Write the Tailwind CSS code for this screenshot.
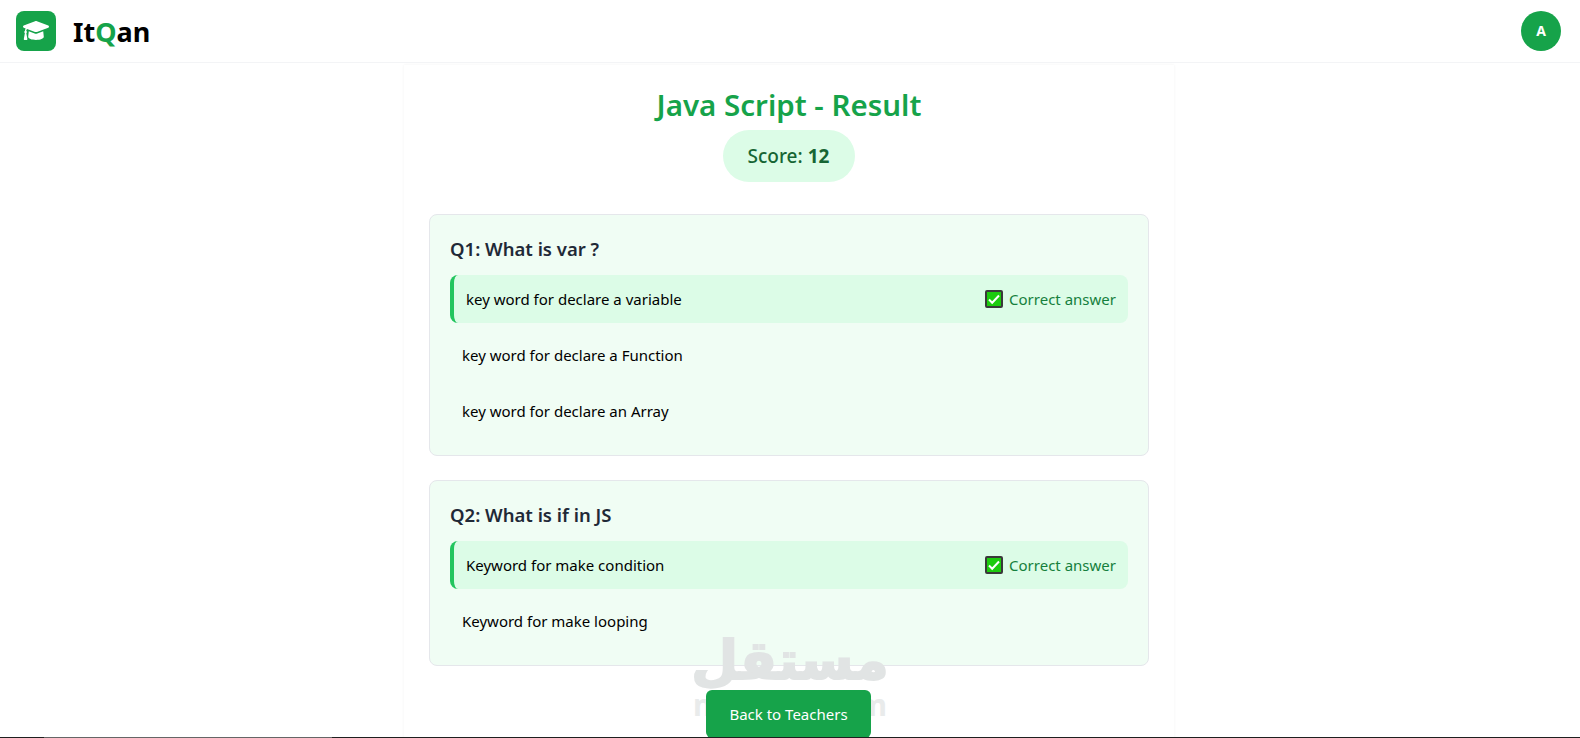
<!DOCTYPE html>
<html lang="en">
  <head>
    <meta charset="UTF-8" />
    <meta name="viewport" content="width=device-width, initial-scale=1.0" />
    <title>ItQan - Result</title>
    <script src="https://cdn.jsdelivr.net/npm/@tailwindcss/browser@4"></script>
  </head>
  <body class="bg-white h-[738px] overflow-hidden relative font-['Noto_Sans','Open_Sans',sans-serif] text-[15px] text-black">
    <!-- Header -->
    <header class="h-[63px] border-b border-[#f3f4f6] pl-4 pr-[19px] flex items-center justify-between">
      <div class="flex items-center gap-[17px]">
        <div class="w-10 h-10 rounded-lg bg-[#16a34a] flex items-center justify-center">
          <svg viewBox="0 64 640 384" preserveAspectRatio="none" class="w-[26px] h-[19px] -mt-[1px]" fill="#fff">
            <path d="M622.34 153.2L343.4 67.5c-15.2-4.67-31.6-4.67-46.79 0L17.66 153.2c-23.54 7.23-23.54 38.36 0 45.59l48.63 14.94c-10.67 13.19-17.23 29.28-17.88 46.9C38.78 266.15 32 276.11 32 288c0 10.78 5.68 19.85 13.86 25.65L20.33 428.53C18.11 438.52 25.71 448 35.94 448h56.11c10.24 0 17.84-9.48 15.62-19.47L82.14 313.65C90.32 307.85 96 298.78 96 288c0-11.57-6.47-21.25-15.66-26.87.76-15.02 8.44-28.3 20.69-36.72L296.6 284.5c9.06 2.78 26.44 6.25 46.79 0l278.95-85.7c23.55-7.24 23.55-38.36 0-45.6zM352.79 315.09c-28.53 8.76-52.84 3.92-65.59 0l-145.02-44.55L128 384c0 35.35 85.96 64 192 64s192-28.65 192-64l-14.18-113.47-145.03 44.56z" />
          </svg>
        </div>
        <span class="text-[27px] font-bold leading-none">It<span class="text-[#16a34a]">Q</span>an</span>
      </div>
      <div class="w-10 h-10 rounded-full bg-[#16a34a] flex items-center justify-center text-white text-sm font-bold">A</div>
    </header>

    <!-- Result card -->
    <main class="w-[770px] ml-[404px] mt-[2px] px-[25px] pt-[22px] bg-white shadow-[0_0_3px_rgba(0,0,0,0.05)] flex flex-col items-center h-[800px]">
      <h1 class="text-[29.5px] leading-[36px] font-semibold text-[#16a34a] text-center">Java Script - Result</h1>
      <div class="mt-[7px] h-[52px] w-[132px] mr-[1px] rounded-full bg-[#dcfce7] text-[#166534] text-[19px] font-medium flex items-center justify-center gap-[5px]">
        <span>Score:</span><span class="font-bold">12</span>
      </div>

      <!-- Q1 -->
      <section class="mt-8 w-full bg-[#f0fdf4] border border-[#e5e7eb] rounded-lg p-5">
        <h2 class="text-[18.5px] font-semibold text-[#1f2937] leading-7 mb-3">Q1: What is var ?</h2>
        <div class="flex flex-col gap-2">
          <div class="h-12 pl-3 pr-3 bg-[#dcfce7] border-l-4 border-[#22c55e] rounded-lg flex items-center justify-between">
            <span>key word for declare a variable</span>
            <span class="flex items-center gap-[6px] text-[#15803d]">
              <span class="w-[18px] h-[18px] bg-[#1ccb0e] border-2 border-[#3a3a3a] rounded-[2px] flex items-center justify-center">
                <svg viewBox="0 0 14 14" class="w-[14px] h-[14px]" fill="none" stroke="#fff" stroke-width="2"><path d="M2 7.5l3.2 3.2L12 3.5" /></svg>
              </span>
              Correct answer
            </span>
          </div>
          <div class="h-12 px-3 flex items-center">key word for declare a Function</div>
          <div class="h-12 px-3 flex items-center">key word for declare an Array</div>
        </div>
      </section>

      <!-- Q2 -->
      <section class="mt-6 w-full bg-[#f0fdf4] border border-[#e5e7eb] rounded-lg p-5">
        <h2 class="text-[18.5px] font-semibold text-[#1f2937] leading-7 mb-3">Q2: What is if in JS</h2>
        <div class="flex flex-col gap-2">
          <div class="h-12 pl-3 pr-3 bg-[#dcfce7] border-l-4 border-[#22c55e] rounded-lg flex items-center justify-between">
            <span>Keyword for make condition</span>
            <span class="flex items-center gap-[6px] text-[#15803d]">
              <span class="w-[18px] h-[18px] bg-[#1ccb0e] border-2 border-[#3a3a3a] rounded-[2px] flex items-center justify-center">
                <svg viewBox="0 0 14 14" class="w-[14px] h-[14px]" fill="none" stroke="#fff" stroke-width="2"><path d="M2 7.5l3.2 3.2L12 3.5" /></svg>
              </span>
              Correct answer
            </span>
          </div>
          <div class="h-12 px-3 flex items-center">Keyword for make looping</div>
        </div>
      </section>

      <button class="relative z-10 mt-6 mr-[1px] w-[165px] h-12 bg-[#16a34a] text-white rounded-md">Back to Teachers</button>
    </main>

    <!-- Watermark -->
    <div class="absolute left-[695px] top-[632px] w-[190px] flex flex-col items-center text-[#e1e4e4] pointer-events-none">
      <span class="text-[54px] leading-[58px] font-bold font-['DejaVu_Sans',sans-serif] [-webkit-text-stroke:2px_#e1e4e4]" dir="rtl">مستقل</span>
      <span class="text-[30px] leading-[30px] font-['Noto_Sans',sans-serif] font-bold text-[#e9ebeb]">mostaql.com</span>
    </div>

    <!-- Window edge -->
    <div class="absolute left-0 right-0 bottom-0 h-px bg-[#1f1f1f] z-20 flex">
      <div class="ml-11 w-72 bg-[#666]"></div>
    </div>
  </body>
</html>
